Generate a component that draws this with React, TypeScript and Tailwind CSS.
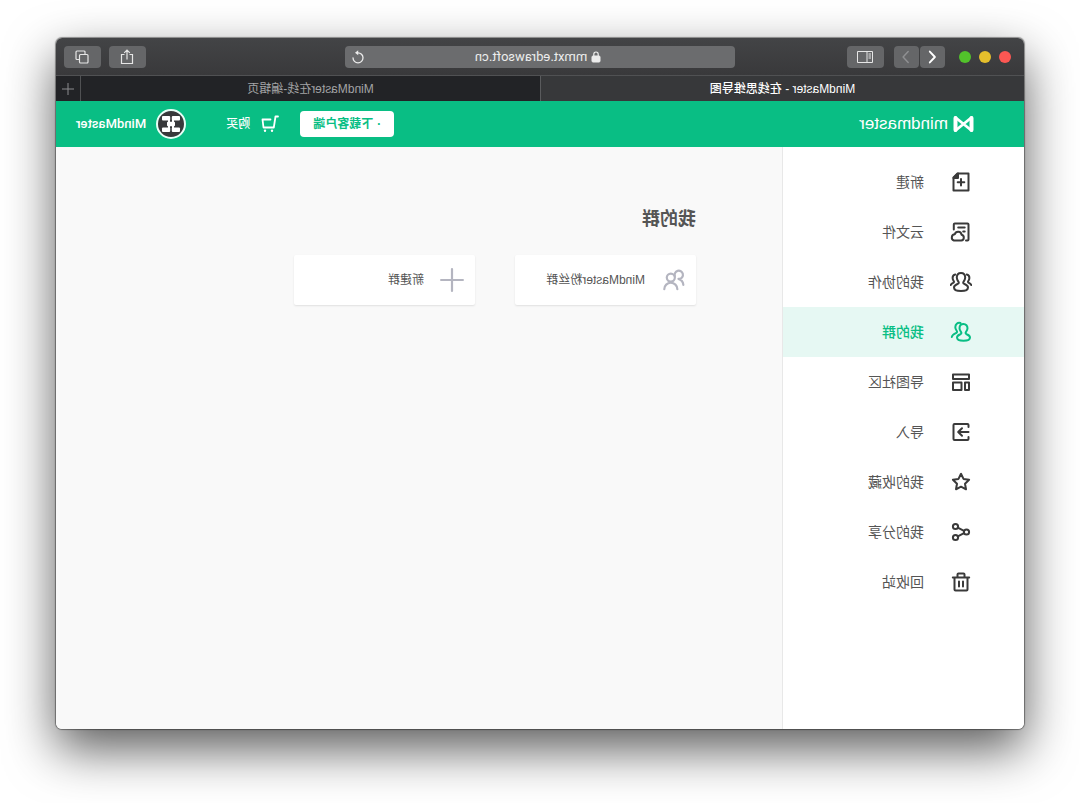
import React, { useState } from 'react';

interface IconProps {
  className?: string;
}

interface NavItem {
  id: string;
  label: string;
  icon: React.FC<IconProps>;
}

const Svg: React.FC<{ className?: string; width?: number; children: React.ReactNode }> = ({
  className = 'size-[22px]',
  width = 2,
  children,
}) => (
  <svg
    viewBox="0 0 22 22"
    className={className}
    fill="none"
    stroke="currentColor"
    strokeWidth={width}
    strokeLinecap="round"
    strokeLinejoin="round"
    aria-hidden="true"
  >
    {children}
  </svg>
);

const NewIcon: React.FC<IconProps> = () => (
  <Svg>
    <path d="M3.500 2.500h11l4 4v13h-15z" />
    <path d="M14 2.500v4.500h4.500z" fill="currentColor" />
    <path d="M11 8v6.600M7.700 11.300h6.600" />
  </Svg>
);

const CloudFileIcon: React.FC<IconProps> = () => (
  <Svg>
    <path d="M6 19.500H4.500a1 1 0 0 1-1-1v-15a1 1 0 0 1 1-1h12.700a1 1 0 0 1 1 1v5" />
    <path d="M7.300 6.500h6.500M7.300 10.500h1.500" />
    <path d="M10.800 19.500a2.900 2.900 0 0 1-.4-5.700 3.500 3.500 0 0 1 6.800-.5 3.200 3.200 0 0 1 .9 6.200z" />
  </Svg>
);

const TeamIcon: React.FC<IconProps> = () => (
  <Svg>
    <path d="M11 2c2.600 0 4.200 2 4.200 4.600 0 1.700-.8 3-1.700 4.200-.6.9-.2 1.700.8 2.100 2 .8 3.700 1.400 3.700 3.600 0 2.500-3.500 3.500-7 3.500s-7-1-7-3.500c0-2.200 1.700-2.800 3.700-3.600 1-.4 1.400-1.200.8-2.100-.9-1.200-1.700-2.500-1.700-4.200C6.800 4 8.400 2 11 2z" />
    <path d="M5.300 3.500C3.600 3.900 2.600 5.300 2.600 7c0 1.400.6 2.400 1.200 3.300.4.700.1 1.200-.6 1.500-1.200.5-2.100 1-2.400 2.200" />
    <path d="M16.700 3.500c1.700.4 2.700 1.800 2.700 3.500 0 1.400-.6 2.400-1.200 3.300-.4.700-.1 1.200.6 1.500 1.200.5 2.100 1 2.400 2.200" />
  </Svg>
);

const GroupIcon: React.FC<IconProps> = () => (
  <Svg>
    <path d="M8.500 3c2.500 0 4 1.900 4 4.300 0 1.600-.8 2.800-1.600 3.900-.6.800-.2 1.600.7 2 2 .8 3.400 1.400 3.400 3.300 0 2.300-3.200 3.200-6.500 3.200S2 18.800 2 16.500c0-1.900 1.400-2.500 3.400-3.300.9-.4 1.300-1.200.7-2-.8-1.100-1.600-2.300-1.600-3.900C4.500 4.900 6 3 8.500 3z" />
    <path d="M11.500 2c3-.8 5.200 1.300 5.200 4.200 0 1.600-.7 2.800-1.500 3.800-.6.900-.2 1.600.7 2 2.300 1 4.100 1.700 4.300 4" />
  </Svg>
);

const CommunityIcon: React.FC<IconProps> = () => (
  <Svg>
    <path d="M3 3.500h16v4.500H3zM3 11.500h4v7.500H3zM10.500 11.500H19v7.500h-8.500z" />
  </Svg>
);

const ImportIcon: React.FC<IconProps> = () => (
  <Svg>
    <path d="M3.500 6V4a1 1 0 0 1 1-1h13a1 1 0 0 1 1 1v14a1 1 0 0 1-1 1h-13a1 1 0 0 1-1-1V16" />
    <path d="M3.500 11h10M10 7.300l3.800 3.700-3.800 3.700" />
  </Svg>
);

const StarIcon: React.FC<IconProps> = () => (
  <Svg>
    <path d="M11 2.800l2.500 5.100 5.600.8-4.100 4 1 5.600-5-2.600-5 2.600 1-5.600-4.100-4 5.600-.8z" />
  </Svg>
);

const ShareNodesIcon: React.FC<IconProps> = () => (
  <Svg>
    <circle cx="5.500" cy="11" r="2.600" />
    <circle cx="16.500" cy="5.500" r="2.600" />
    <circle cx="16.500" cy="16.500" r="2.600" />
    <path d="M8 9.800l6.200-3.200M8 12.200l6.200 3.200" />
  </Svg>
);

const TrashIcon: React.FC<IconProps> = () => (
  <Svg>
    <path d="M2.800 6.500h16.400M4.500 6.500v12a1 1 0 0 0 1 1h11a1 1 0 0 0 1-1v-12M7.500 6V3.500a1 1 0 0 1 1-1h5a1 1 0 0 1 1 1V6M9 10.500v5M13 10.500v5" />
  </Svg>
);

const navItems: NavItem[] = [
  { id: 'new', label: '新建', icon: NewIcon },
  { id: 'cloud', label: '云文件', icon: CloudFileIcon },
  { id: 'team', label: '我的协作', icon: TeamIcon },
  { id: 'group', label: '我的群', icon: GroupIcon },
  { id: 'community', label: '导图社区', icon: CommunityIcon },
  { id: 'import', label: '导入', icon: ImportIcon },
  { id: 'favorite', label: '我的收藏', icon: StarIcon },
  { id: 'share', label: '我的分享', icon: ShareNodesIcon },
  { id: 'trash', label: '回收站', icon: TrashIcon },
];

const toolButton = 'flex h-[22px] items-center justify-center rounded bg-[#656668] text-[#e6e6e6]';

const BrowserBar: React.FC = () => (
  <div className="flex h-[38px] items-center border-b border-[#505153] bg-linear-to-b from-[#434446] to-[#39393b] px-2">
    <div className="flex flex-1 items-center">
      <div className="ml-[5px] flex gap-2">
        <span className="size-3 rounded-full bg-[#fc5753]" />
        <span className="size-3 rounded-full bg-[#e5bf2c]" />
        <span className="size-3 rounded-full bg-[#52c22b]" />
      </div>
      <div className="ml-[14px] flex gap-px">
        <button aria-label="Back" className={`${toolButton} w-[25px]`}>
          <Svg className="size-4 text-white" width={2.600}>
            <path d="M14 3.500L7 11l7 7.500" />
          </Svg>
        </button>
        <button aria-label="Forward" className={`${toolButton} w-[25px]`}>
          <Svg className="size-4 text-[#8f9092]" width={2}>
            <path d="M8 3.500l7 7.500-7 7.500" />
          </Svg>
        </button>
      </div>
      <button aria-label="Sidebar" className={`${toolButton} ml-[10px] w-[37px]`}>
        <svg viewBox="0 0 16 14" className="h-[14px] w-4" fill="none" stroke="currentColor" aria-hidden="true">
          <path d="M.5 1.500h15v11H.5zM6 1.500v11M2 4h2.500M2 6h2.500M2 8h2.500" />
        </svg>
      </button>
    </div>
    <div className="flex h-[22px] w-[41%] items-center rounded bg-[#6b6c6e] pr-[6px] pl-6 text-[#ececec]">
      <div className="flex flex-1 items-center justify-center gap-1">
        <svg viewBox="0 0 10 12" className="h-3 w-[10px]" fill="none" stroke="currentColor" aria-hidden="true">
          <rect x="1" y="5" width="8" height="6" rx="1" fill="currentColor" />
          <path d="M2.800 5V3.200a2.200 2.200 0 0 1 4.400 0V5" strokeWidth="1.200" />
        </svg>
        <input
          type="text"
          aria-label="Address"
          defaultValue="mmxt.edrawsoft.cn"
          className="field-sizing-content bg-transparent font-[Roboto,sans-serif] text-[13px] leading-4 outline-none"
        />
      </div>
      <button aria-label="Reload">
        <svg viewBox="0 0 14 14" className="size-[14px]" fill="none" stroke="currentColor" strokeWidth="1.300" aria-hidden="true">
          <path d="M7 2.800a5 5 0 1 0 5 5" strokeLinecap="round" />
          <path d="M6.800.3L10 2.800 6.800 5.300z" fill="currentColor" stroke="none" />
        </svg>
      </button>
    </div>
    <div className="flex flex-1 justify-end gap-2">
      <button aria-label="Share" className={`${toolButton} w-[37px]`}>
        <svg viewBox="0 0 14 16" className="h-4 w-[14px]" fill="none" stroke="currentColor" strokeWidth="1.200" aria-hidden="true">
          <path d="M4.500 5.500h-3v9h11v-9h-3M7 10.500V1.200M4.200 3.800L7 1l2.800 2.800" />
        </svg>
      </button>
      <button aria-label="Show tabs" className={`${toolButton} w-[37px]`}>
        <svg viewBox="0 0 14 14" className="size-[14px]" fill="none" stroke="currentColor" strokeWidth="1.200" aria-hidden="true">
          <rect x="1" y="4.500" width="8.500" height="8.500" rx="1" />
          <path d="M4 4V2a1 1 0 0 1 1-1h7a1 1 0 0 1 1 1v6.500a1 1 0 0 1-1 1h-2" />
        </svg>
      </button>
    </div>
  </div>
);

const TabBar: React.FC = () => (
  <div className="flex h-[25px] bg-[#222326] text-xs">
    <button className="w-1/2 border-r border-[#5a5b5d] bg-[#37383a] font-medium text-white">
      MindMaster - 在线思维导图
    </button>
    <button className="flex-1 text-[#a2a3a5]">MindMaster在线-编辑页</button>
    <button
      aria-label="New tab"
      className="flex w-[25px] items-center justify-center border-l border-[#505153] text-[#8b8c8e]"
    >
      <svg viewBox="0 0 12 12" className="size-3" stroke="currentColor" aria-hidden="true">
        <path d="M6 0v12M0 6h12" />
      </svg>
    </button>
  </div>
);

const AppHeader: React.FC = () => (
  <header className="flex h-[46px] items-center bg-[#09be84] pr-5 pl-[50px] text-white">
    <a href="#" className="flex items-center gap-[5px]">
      <svg viewBox="0 0 21 18" className="h-[18px] w-[21px]" fill="none" stroke="currentColor" strokeLinejoin="round" aria-hidden="true">
        <path d="M2.500 3v12M18.500 3v12" strokeWidth="4" strokeLinecap="round" />
        <path d="M2.500 2.500L10.500 9l8 6.500M18.500 2.500l-8 6.500-8 6.500" strokeWidth="2.800" strokeLinecap="round" />
      </svg>
      <span className="text-[17px] leading-6">mindmaster</span>
    </a>
    <button className="ml-auto h-[26px] rounded bg-white px-[13px] text-xs font-bold text-[#09be84]">
      · 下载客户端
    </button>
    <a href="#" className="ml-[21px] flex items-center gap-[11px] text-xs font-medium">
      <svg viewBox="0 0 18 18" className="size-[18px]" fill="none" stroke="currentColor" strokeWidth="1.800" strokeLinecap="round" strokeLinejoin="round" aria-hidden="true">
        <path d="M1 1.500h2.500l1.700 11h10.300l1-8H8.500" />
        <circle cx="7" cy="15.800" r="1.200" fill="currentColor" stroke="none" />
        <circle cx="14" cy="15.800" r="1.200" fill="currentColor" stroke="none" />
      </svg>
      购买
    </a>
    <a href="#" className="ml-10 flex items-center gap-[10px] font-[Roboto,sans-serif] text-[13px] font-medium">
      <svg viewBox="0 0 30 30" className="size-[30px]" aria-hidden="true">
        <circle cx="15" cy="15" r="14" fill="#38393b" stroke="#e8fff7" strokeWidth="2" />
        <g fill="#fff">
          <rect x="6" y="7" width="8.200" height="4.600" rx="1" />
          <rect x="15.800" y="7" width="8.200" height="4.600" rx="1" />
          <rect x="6" y="18.400" width="8.200" height="4.600" rx="1" />
          <rect x="15.800" y="18.400" width="8.200" height="4.600" rx="1" />
          <rect x="11" y="12.800" width="8" height="4.400" rx="1" />
          <rect x="12" y="11" width="2" height="8" />
          <rect x="16" y="11" width="2" height="8" />
        </g>
      </svg>
      MindMaster
    </a>
  </header>
);

const App: React.FC = () => {
  const [active, setActive] = useState('group');

  return (
    // The whole window is shown mirrored
    <div className="flex min-h-screen -scale-x-100 flex-col bg-white px-14 pt-[38px] pb-[74px] font-['Liberation_Sans','Noto_Sans_CJK_SC',sans-serif]">
      <div className="flex flex-1 flex-col overflow-hidden rounded-md shadow-[0_0_1px_1px_rgba(0,0,0,0.4),0_20px_50px_rgba(0,0,0,0.65)]">
        <BrowserBar />
        <TabBar />
        <AppHeader />
        <div className="flex flex-1">
          <nav className="w-1/4 border-r border-[#e8e8e8] bg-white pt-[10px]">
            {navItems.map(({ id, label, icon: Icon }) => (
              <button
                key={id}
                onClick={() => setActive(id)}
                className={`flex h-[50px] w-full items-center gap-[26px] pl-[52px] text-sm ${
                  active === id ? 'bg-[#e6f8f3] font-medium text-[#09be84]' : 'text-[#555]'
                }`}
              >
                <span className={active === id ? '' : 'text-[#3a3a3a]'}>
                  <Icon />
                </span>
                {label}
              </button>
            ))}
          </nav>
          <main className="flex-1 bg-[#f9f9f9] pt-[58px] pl-[86px]">
            <h1 className="text-lg leading-7 font-bold text-[#555]">我的群</h1>
            <div className="mt-[22px] flex gap-10">
              <button className="flex h-[50px] w-[181px] items-center gap-4 rounded-xs bg-white pl-[11px] text-xs text-[#555] shadow-[0_1px_2px_rgba(0,0,0,0.1)]">
                <Svg className="size-6 text-[#b4b5c0]">
                  <circle cx="13" cy="8.800" r="3.700" />
                  <path d="M7 19.500a6 6 0 0 1 12 0M9.300 7.500A3.800 3.800 0 1 0 5 10M1.500 15.500A6.500 6.500 0 0 1 6 10" />
                </Svg>
                MindMaster粉丝群
              </button>
              <button className="flex h-[50px] w-[181px] items-center gap-4 rounded-xs bg-white pl-[11px] text-xs text-[#555] shadow-[0_1px_2px_rgba(0,0,0,0.1)]">
                <Svg className="size-6 text-[#b4b5c0]">
                  <path d="M11 1v20M1 11h20" />
                </Svg>
                新建群
              </button>
            </div>
          </main>
        </div>
      </div>
    </div>
  );
};

export default App;
